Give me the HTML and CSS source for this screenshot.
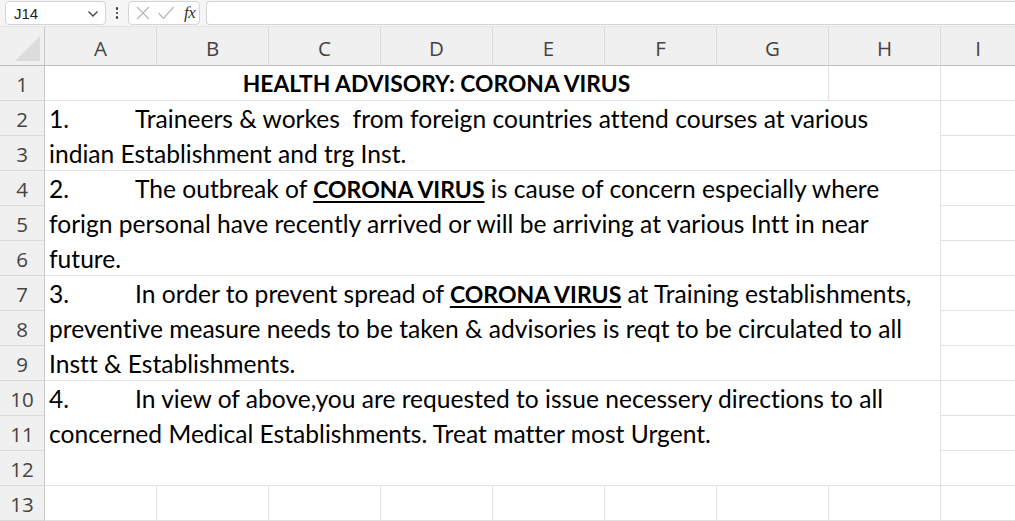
FILE: index.html
```html
<!DOCTYPE html>
<html>
<head>
<meta charset="utf-8">
<link rel="stylesheet" href="styles.css">
</head>
<body>
<div class="app">
  <div class="toolbar">
    <div class="namebox">
      <span class="name">J14</span>
      <svg class="chev" width="12" height="8" viewBox="0 0 12 8"><path d="M1.5 1.5 L6 6 L10.5 1.5" fill="none" stroke="#444" stroke-width="1.3"/></svg>
    </div>
    <div class="dots"><span></span><span></span><span></span></div>
    <div class="fxbox">
      <svg width="16" height="16" viewBox="0 0 16 16"><path d="M2 2 L14 14 M14 2 L2 14" stroke="#b8b8b8" stroke-width="1.2" fill="none"/></svg>
      <svg width="18" height="16" viewBox="0 0 18 16"><path d="M1.5 8 L6.5 13.5 L16.5 2" stroke="#b8b8b8" stroke-width="1.2" fill="none"/></svg>
      <span class="fx">fx</span>
    </div>
    <div class="formula"></div>
  </div>
  <div class="sheet">
    <div class="corner"><div class="tri"></div></div>
    <div class="ch">A</div><div class="ch">B</div><div class="ch">C</div><div class="ch">D</div>
    <div class="ch">E</div><div class="ch">F</div><div class="ch">G</div><div class="ch">H</div><div class="ch last">I</div>

    <div class="rh" style="grid-row:2">1</div>
    <div class="rh" style="grid-row:3">2</div>
    <div class="rh" style="grid-row:4">3</div>
    <div class="rh" style="grid-row:5">4</div>
    <div class="rh" style="grid-row:6">5</div>
    <div class="rh" style="grid-row:7">6</div>
    <div class="rh" style="grid-row:8">7</div>
    <div class="rh" style="grid-row:9">8</div>
    <div class="rh" style="grid-row:10">9</div>
    <div class="rh" style="grid-row:11">10</div>
    <div class="rh" style="grid-row:12">11</div>
    <div class="rh" style="grid-row:13">12</div>
    <div class="rh" style="grid-row:14">13</div>

    <div class="cell title r1">HEALTH ADVISORY: CORONA VIRUS</div>
    <div class="cell h1"></div>
    <div class="cell icol" style="grid-row:2"></div>

    <div class="cell para p2">
      <div class="ln"><span class="num">1.</span>Traineers &amp; workes &nbsp;from foreign countries attend courses at various</div>
      <div class="ln">indian Establishment and trg Inst.</div>
    </div>
    <div class="cell icol" style="grid-row:3"></div>
    <div class="cell icol" style="grid-row:4"></div>

    <div class="cell para p4">
      <div class="ln"><span class="num">2.</span>The outbreak of <b class="hl">CORONA VIRUS</b> is cause of concern especially where</div>
      <div class="ln">forign personal have recently arrived or will be arriving at various Intt in near</div>
      <div class="ln">future.</div>
    </div>
    <div class="cell icol" style="grid-row:5"></div>
    <div class="cell icol" style="grid-row:6"></div>
    <div class="cell icol" style="grid-row:7"></div>

    <div class="cell para p7">
      <div class="ln"><span class="num">3.</span>In order to prevent spread of <b class="hl">CORONA VIRUS</b> at Training establishments,</div>
      <div class="ln">preventive measure needs to be taken &amp; advisories is reqt to be circulated to all</div>
      <div class="ln">Instt &amp; Establishments.</div>
    </div>
    <div class="cell icol" style="grid-row:8"></div>
    <div class="cell icol" style="grid-row:9"></div>
    <div class="cell icol" style="grid-row:10"></div>

    <div class="cell para p10">
      <div class="ln"><span class="num">4.</span>In view of above,you are requested to issue necessery directions to all</div>
      <div class="ln">concerned Medical Establishments. Treat matter most Urgent.</div>
      <div class="ln"></div>
    </div>
    <div class="cell icol" style="grid-row:11"></div>
    <div class="cell icol" style="grid-row:12"></div>
    <div class="cell icol" style="grid-row:13"></div>

    <div class="cell r13"></div><div class="cell r13"></div><div class="cell r13"></div><div class="cell r13"></div>
    <div class="cell r13"></div><div class="cell r13"></div><div class="cell r13"></div><div class="cell r13"></div>
    <div class="cell icol" style="grid-row:14"></div>
  </div>
</div>
</body>
</html>
```

FILE: styles.css
```css
* { box-sizing: border-box; }
html, body { margin: 0; padding: 0; }
body {
  width: 1015px;
  height: 521px;
  overflow: hidden;
  background: #ffffff;
  font-family: "Open Sans", "Noto Sans", sans-serif;
}
.app { display: flex; flex-direction: column; width: 1015px; height: 521px; }

.toolbar {
  height: 27px;
  flex: none;
  display: flex;
  align-items: center;
  background: #f5f5f5;
  padding: 0 0 0 5px;
  border-bottom: 1px solid #e4e4e4;
}
.namebox {
  width: 101px;
  height: 24px;
  background: #fff;
  border: 1px solid #d4d4d4;
  border-radius: 4px;
  display: flex;
  align-items: center;
  justify-content: space-between;
  padding: 0 6px 0 8px;
}
.name { font-family: "Liberation Sans", Arial, sans-serif; font-size: 15px; color: #222; }
.chev { margin-top: 2px; }
.dots {
  width: 22px;
  display: flex;
  flex-direction: column;
  align-items: center;
  gap: 2px;
}
.dots span { width: 2.5px; height: 2.5px; background: #333; border-radius: 50%; }
.fxbox {
  width: 72px;
  height: 24px;
  background: #fff;
  border: 1px solid #d4d4d4;
  border-radius: 4px;
  display: flex;
  align-items: center;
  gap: 6px;
  padding: 0 0 0 6px;
}
.fx {
  font-family: "Liberation Serif", "DejaVu Serif", serif;
  font-style: italic;
  font-size: 17px;
  color: #333;
  margin-left: 3px;
  letter-spacing: -0.5px;
}
.formula {
  flex: 1;
  height: 24px;
  margin-left: 6px;
  background: #fff;
  border: 1px solid #d4d4d4;
  border-right: none;
  border-radius: 4px 0 0 4px;
}

.sheet {
  flex: 1;
  display: grid;
  grid-template-columns: 45px repeat(8, 112px) 1fr;
  grid-template-rows: 39px repeat(13, 35px);
  background: #fff;
}
.corner {
  grid-row: 1; grid-column: 1;
  background: #f0f0f0;
  border-right: 1px solid #c8c8c8;
  border-bottom: 1px solid #bdbdbd;
  position: relative;
}
.tri {
  position: absolute;
  right: 4px; bottom: 4px;
  width: 25px; height: 25px;
  background: #dcdcdc;
  clip-path: polygon(100% 0, 100% 100%, 0 100%);
}
.ch {
  grid-row: 1;
  background: #f0f0f0;
  border-right: 1px solid #dadada;
  border-bottom: 1px solid #bdbdbd;
  display: flex;
  align-items: center;
  justify-content: center;
  padding-top: 4px;
  font-family: "Open Sans", "Noto Sans", sans-serif;
  font-size: 20.5px;
  color: #444;
}
.ch.last { border-right: none; }
.rh {
  grid-column: 1;
  background: #f0f0f0;
  border-right: 1px solid #c8c8c8;
  border-bottom: 1px solid #dadada;
  display: flex;
  align-items: center;
  justify-content: center;
  padding-top: 2px;
  font-family: "Open Sans", "Noto Sans", sans-serif;
  font-size: 20.5px;
  color: #444;
}
.cell {
  border-right: 1px solid #e1e1e1;
  border-bottom: 1px solid #e1e1e1;
  font-family: "Lato", "Open Sans", sans-serif;
  font-size: 24.6px;
  font-variant-ligatures: none;
  font-feature-settings: "liga" 0, "clig" 0, "dlig" 0;
  color: #000;
}
.icol { grid-column: 10; border-right: none; }
.r1 { grid-row: 2; grid-column: 2 / 9; }
.h1 { grid-row: 2; grid-column: 9; }
.title {
  font-weight: bold;
  font-size: 22.8px;
  text-align: center;
  line-height: 35px;
  white-space: nowrap;
}
.para { grid-column: 2 / 10; padding-left: 4px; }
.p2 { grid-row: 3 / 5; }
.p4 { grid-row: 5 / 8; }
.p7 { grid-row: 8 / 11; }
.p10 { grid-row: 11 / 14; }
.r13 { grid-row: 14; }
.ln { height: 35px; line-height: 36px; white-space: nowrap; }
.num { display: inline-block; width: 86px; }
.hl {
  font-size: 23px;
  text-decoration: underline;
  text-decoration-thickness: 2px;
  text-underline-offset: 3px;
}
```
